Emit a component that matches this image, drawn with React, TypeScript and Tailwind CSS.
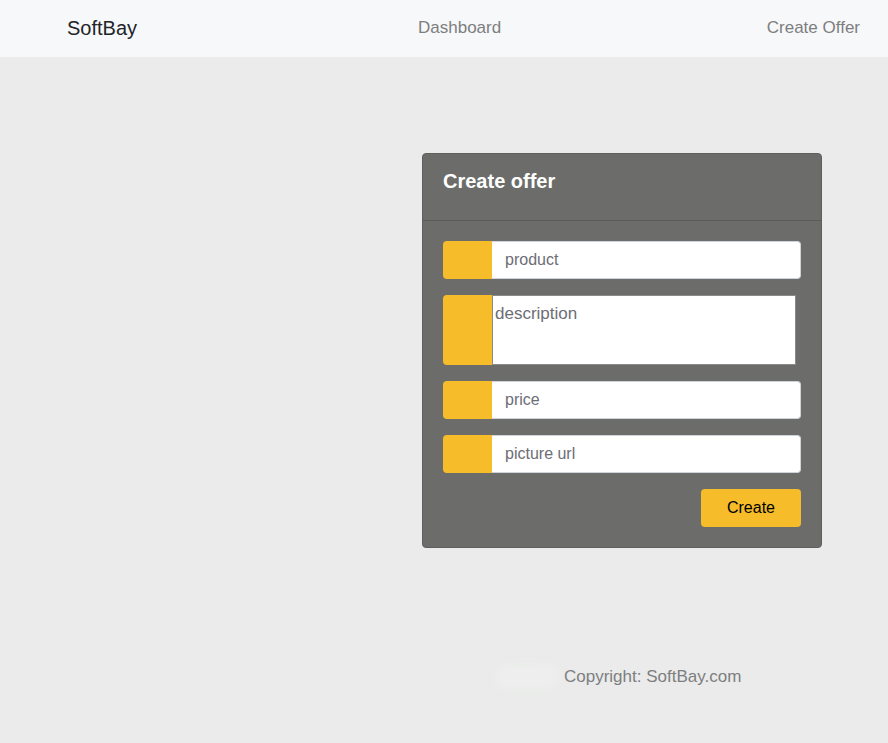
import React from "react";

const font = { fontFamily: '"Liberation Sans", Arial, sans-serif' };

function Field({ placeholder }: { placeholder: string }) {
  return (
    <div className="flex h-[38px] w-full">
      <div className="w-[49px] shrink-0 rounded-l-[4px] bg-[#f6bc2a]" />
      <div className="flex flex-1 items-center rounded-r-[4px] border border-l-0 border-[#ced4da] bg-white pl-[13px] text-[16px] text-[#6c6d75]">
        {placeholder}
      </div>
    </div>
  );
}

export default function App() {
  return (
    <div className="flex min-h-[743px] flex-col bg-[#eaebea]" style={font}>
      <nav className="flex h-[57px] items-center bg-[#f7f8f9] pb-[2px]">
        <div className="ml-[67px] w-[351px] text-[20px] text-[#212529]">SoftBay</div>
        <div className="text-[17px] text-[#7d7e80]">Dashboard</div>
        <div className="ml-auto mr-[28px] text-[17px] text-[#7d7e80]">Create Offer</div>
      </nav>
      <div className="flex pt-[96px]">
        <div className="ml-[422px] w-[400px] overflow-hidden rounded-[4px] border border-[#5f605e] bg-[#6c6d6b]">
          <div className="h-[67px] border-b border-[#5b5c5a] pl-[20px] pt-[12px] text-[20px] font-bold text-white">
            Create offer
          </div>
          <div className="flex flex-col gap-[16px] px-[20px] pb-[20px] pt-[20px]">
            <Field placeholder="product" />
            <div className="flex h-[70px] w-[353px]">
              <div className="w-[49px] shrink-0 rounded-l-[4px] bg-[#f6bc2a]" />
              <div className="flex-1 border border-[#8a8a8a] bg-white pl-[2px] pt-[8px] text-[17px] leading-[19px] text-[#6c6d75]">
                description
              </div>
            </div>
            <Field placeholder="price" />
            <Field placeholder="picture url" />
            <div className="flex justify-end">
              <div className="flex h-[38px] w-[100px] items-center justify-center rounded-[4px] bg-[#f6bc2a] text-[16px] text-black">
                Create
              </div>
            </div>
          </div>
        </div>
      </div>
      <div className="mt-[116px] flex items-center">
        <div className="ml-[495px] h-[26px] w-[64px] rounded-full bg-[#edeeed] blur-[4px]" />
        <div className="ml-[5px] text-[17px] text-[#7d7e80]">Copyright: SoftBay.com</div>
      </div>
    </div>
  );
}
